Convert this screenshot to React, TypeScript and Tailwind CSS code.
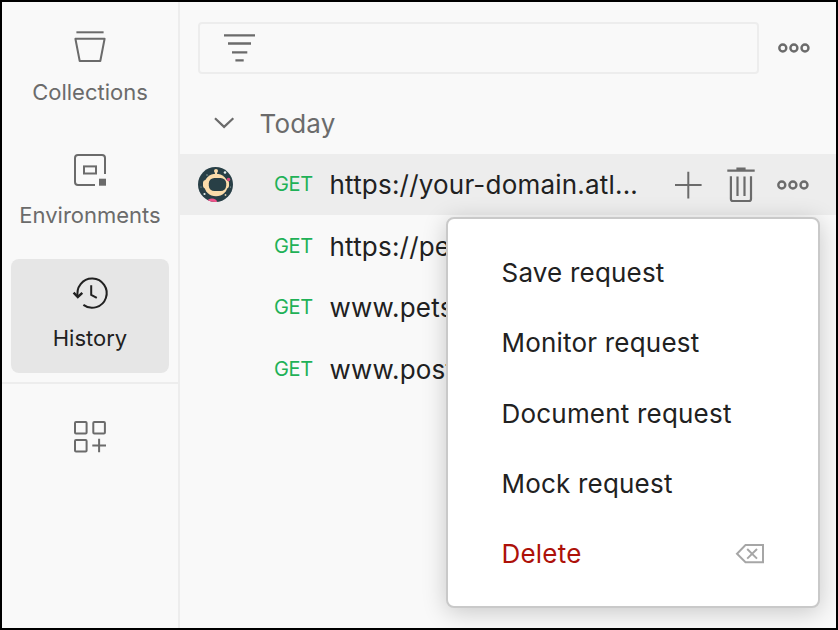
import type { ReactNode } from "react";

function NavItem({ label, active = false, children }: { label: string; active?: boolean; children: ReactNode }) {
  return (
    <button
      className={`flex h-[114px] w-[158px] flex-col items-center rounded-lg pt-3.5 ${
        active ? "bg-[#e6e6e6] text-[#212121]" : "text-[#6b6b6b]"
      }`}
    >
      <svg className="h-10 w-10" viewBox="0 0 40 40" fill="none" stroke="currentColor" strokeWidth="2">
        {children}
      </svg>
      <span className="mt-[11px] text-[22px] leading-7 whitespace-nowrap">{label}</span>
    </button>
  );
}

function Dots() {
  return (
    <svg className="h-10 w-10" viewBox="0 0 40 40" fill="none" stroke="#6b6b6b" strokeWidth="2.4">
      <circle cx="8.8" cy="20" r="3.5" />
      <circle cx="19.9" cy="20" r="3.5" />
      <circle cx="31" cy="20" r="3.5" />
    </svg>
  );
}

function Avatar() {
  return (
    <svg className="h-[35px] w-[35px]" viewBox="0 0 35 35">
      <defs>
        <clipPath id="face">
          <circle cx="17.5" cy="17.5" r="17.5" />
        </clipPath>
      </defs>
      <g clipPath="url(#face)">
        <rect width="35" height="35" fill="#283f46" />
        <circle cx="18" cy="4" r="2" fill="#fbdcab" />
        <rect x="17" y="4" width="2" height="4" fill="#fbdcab" />
        <rect x="5" y="13" width="26" height="8.5" rx="3" fill="#fbdcab" />
        <ellipse cx="18" cy="18" rx="11.8" ry="11.2" fill="#fbdcab" />
        <rect x="10.8" y="10.9" width="17.4" height="13.2" rx="5.6" fill="#283f46" />
        <circle cx="30.5" cy="12.5" r="1.8" fill="#d9497d" />
        <ellipse cx="14" cy="34.5" rx="5" ry="3" fill="#f0558c" />
        <circle cx="27" cy="5.5" r="1.3" fill="#e8f0ee" />
        <circle cx="6.5" cy="27" r="1.1" fill="#e8f0ee" />
        <circle cx="27.5" cy="28" r="0.9" fill="#d9c9a4" />
        <circle cx="9" cy="8" r="0.7" fill="#9db3b0" />
        <circle cx="3" cy="20" r="0.6" fill="#9db3b0" />
        <circle cx="32.5" cy="20" r="0.6" fill="#9db3b0" />
      </g>
    </svg>
  );
}

function Method() {
  return <span className="-mt-0.5 w-14 text-[20px] leading-7 tracking-[-0.4px] text-[#1fb157]">GET</span>;
}

function RequestRow({ url }: { url: string }) {
  return (
    <div className="flex h-[61.7px] items-center pl-[94px]">
      <Method />
      <span className="-ml-[0.5px] text-[26px] leading-8 tracking-[0.2px] whitespace-nowrap">{url}</span>
    </div>
  );
}

const menuItems = ["Save request", "Monitor request", "Document request", "Mock request"];

export default function App() {
  return (
    <div className="relative flex h-[630px] w-[838px] overflow-hidden border-2 border-black bg-[#f9f9f9] font-['Inter','Liberation_Sans',sans-serif] text-[#212121]">
      <nav className="flex w-[178px] shrink-0 flex-col items-center border-r-2 border-[#ededed]">
        <div className="flex flex-col gap-[9px] pt-[11px]">
          <NavItem label="Collections">
            <path d="M6.4 5.3H33.6" />
            <path d="M5.4 11.8H34.6L30.3 34H9.7Z" strokeLinejoin="round" />
          </NavItem>
          <NavItem label="Environments">
            <path d="M25 35H8a3 3 0 0 1-3-3V8a3 3 0 0 1 3-3H32a3 3 0 0 1 3 3V24" />
            <rect x="14" y="16.4" width="12" height="7.1" />
            <rect x="29" y="28.7" width="7" height="7" fill="currentColor" stroke="none" />
          </NavItem>
          <NavItem label="History" active>
            <path d="M8 24A14.6 14.6 0 1 1 13.4 31.9" />
            <path d="M3.6 19.6L7.8 24L12.3 19.8" strokeWidth="2.4" />
            <path d="M21.2 12.2V21.8L26.8 24.8" />
          </NavItem>
        </div>
        <div className="mt-[9px] h-0.5 w-full bg-[#ededed]" />
        <svg className="mt-8 h-10 w-10" viewBox="0 0 40 40" fill="none" stroke="#6b6b6b" strokeWidth="2">
          <rect x="5" y="6" width="11.6" height="11.4" rx="1" />
          <rect x="23.3" y="6" width="11.6" height="11.4" rx="1" />
          <rect x="5" y="24.1" width="11.6" height="11.4" rx="1" />
          <path d="M22.3 29.4H36M29.1 22.7V36.2" />
        </svg>
      </nav>

      <main className="flex min-w-0 flex-1 flex-col">
        <div className="mt-5 flex h-[52px] items-center pl-[18px]">
          <div className="flex h-[52px] w-[561px] items-center rounded border-2 border-[#ededed] pl-[19px]">
            <svg className="h-10 w-10" viewBox="0 0 40 40" stroke="#6b6b6b" strokeWidth="2.4">
              <path d="M5 7.4H36M9 15.5H32M13 24.4H28.3M16.4 32.4H24.7" />
            </svg>
          </div>
          <div className="ml-[15px]">
            <Dots />
          </div>
        </div>

        <div className="mt-[30px] flex h-10 items-center pl-6">
          <svg className="h-10 w-10" viewBox="0 0 40 40" fill="none" stroke="#6b6b6b" strokeWidth="2.2">
            <path d="M11 14.3L20.1 22.9L29.3 14.3" />
          </svg>
          <span className="ml-[15.5px] text-[26px] leading-8 tracking-[0.2px] text-[#6b6b6b]">Today</span>
        </div>

        <div className="mt-[10px] mb-[0.7px] flex h-[61px] shrink-0 items-center bg-[#ededed] pl-[18px]">
          <Avatar />
          <div className="ml-[41px] flex items-center">
            <Method />
            <span className="-ml-[0.5px] w-[340.5px] text-[26px] leading-8 tracking-[0.2px] whitespace-nowrap">
              https://your-domain.atl...
            </span>
          </div>
          <svg className="-ml-0.5 h-10 w-10" viewBox="0 0 40 40" stroke="#6b6b6b" strokeWidth="2">
            <path d="M7 20H33.6M20.3 6.7V33.4" />
          </svg>
          <svg className="ml-3 h-10 w-10" viewBox="0 0 40 40" fill="none" stroke="#6b6b6b" strokeWidth="2.2">
            <path d="M7.3 5.6H34.7M16.4 3.6H25.6M17.5 11.5V31M24.5 11.5V31" />
            <path d="M10.9 11.2V34a2 2 0 0 0 2 2H29a2 2 0 0 0 2-2V11.2" />
          </svg>
          <div className="ml-[13px]">
            <Dots />
          </div>
        </div>
        <RequestRow url="https://petstore.io" />
        <RequestRow url="www.petstore.io" />
        <RequestRow url="www.postman.com" />
      </main>

      <div className="absolute top-[215px] left-[444px] flex h-[391px] w-[374px] flex-col rounded-lg border-2 border-[#c9c9c9] bg-white pt-[18.8px] pl-[53.5px] text-[26px] tracking-[0.2px] shadow-[0_4px_24px_rgba(0,0,0,0.2)]">
        {menuItems.map((item) => (
          <div key={item} className="flex h-[70.3px] items-center leading-8 whitespace-nowrap">
            {item}
          </div>
        ))}
        <div className="flex h-[70.3px] items-center justify-between pr-12 leading-8 text-[#ad1109]">
          Delete
          <svg className="h-10 w-10" viewBox="0 0 40 40" fill="none" stroke="#a6a6a6" strokeWidth="2">
            <path d="M15.5 11.1H33V28.3H15.5L7 19.7Z" />
            <path d="M17.2 15L27 24.6M27 15L17.2 24.6" />
          </svg>
        </div>
      </div>
    </div>
  );
}
